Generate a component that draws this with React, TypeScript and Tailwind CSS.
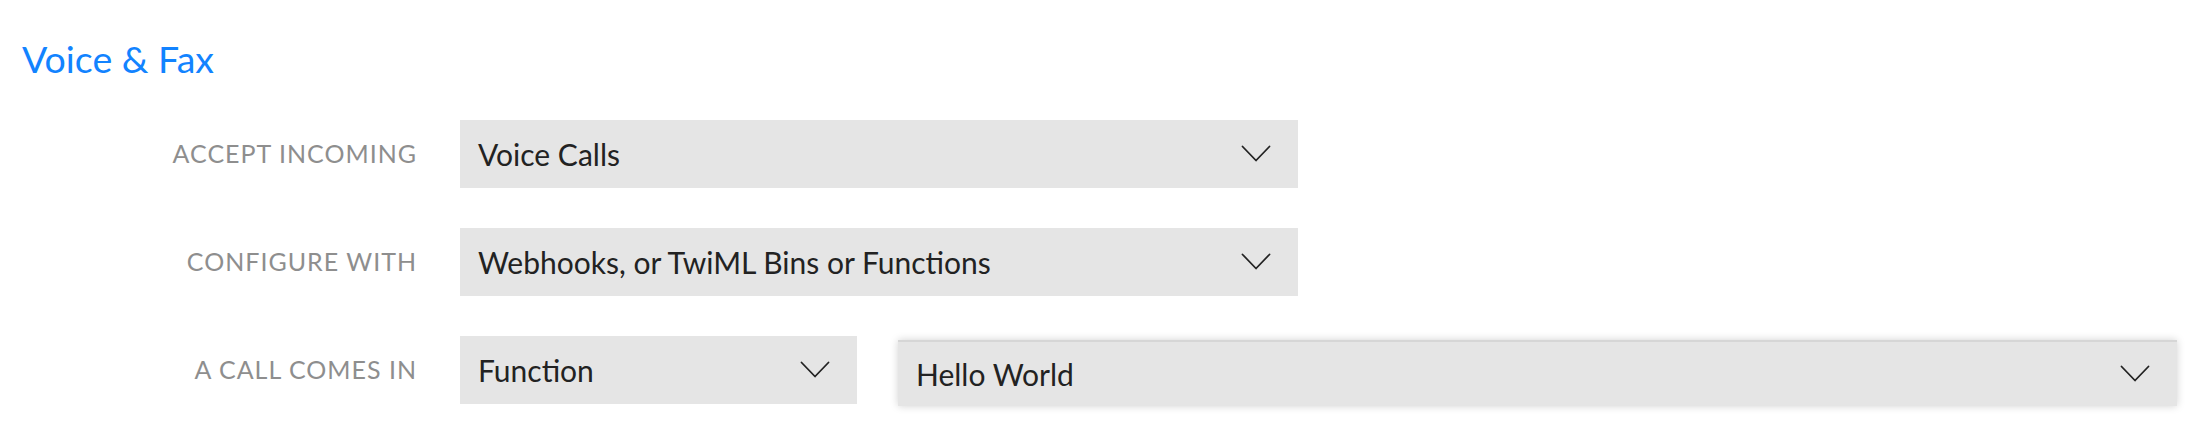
import React from "react";

const Chevron = () => (
  <svg width="30" height="18" viewBox="0 0 30 18" fill="none" className="shrink-0">
    <path d="M1.5 1.5 L15 15.5 L28.5 1.5" stroke="#222" strokeWidth="1.8" strokeLinecap="round" strokeLinejoin="round" />
  </svg>
);

const Select = ({ value, className = "" }: { value: string; className?: string }) => (
  <div className={`flex items-center justify-between bg-[#e5e5e5] pl-[18px] pr-[27px] ${className}`}>
    <span className="text-[30px] text-[#222222]">{value}</span>
    <Chevron />
  </div>
);

const Label = ({ children }: { children: React.ReactNode }) => (
  <div className="flex h-[68px] w-[395px] shrink-0 items-center justify-end text-[25px] tracking-[1px] text-[#8e8e8e]">
    {children}
  </div>
);

export default function App() {
  return (
    <div className="h-[428px] w-[2206px] bg-white pl-[22px] pt-[37px]" style={{ fontFamily: "Lato, 'Open Sans', sans-serif" }}>
      <h2 className="text-[37.5px] leading-[44px] text-[#1283ff]">Voice &amp; Fax</h2>
      <div className="mt-[39px] flex flex-col gap-[40px]">
        <div className="flex items-start gap-[43px]">
          <Label>ACCEPT INCOMING</Label>
          <Select value="Voice Calls" className="h-[68px] w-[838px]" />
        </div>
        <div className="flex items-start gap-[43px]">
          <Label>CONFIGURE WITH</Label>
          <Select value="Webhooks, or TwiML Bins or Functions" className="h-[68px] w-[838px]" />
        </div>
        <div className="flex items-start gap-[43px] pr-[29px]">
          <Label>A CALL COMES IN</Label>
          <Select value="Function" className="h-[68px] w-[397px] shrink-0" />
          <div className="mt-[4px] flex-1">
            <Select
              value="Hello World"
              className="-ml-[2px] h-[66px] border-t-2 border-[#d6d6d6] shadow-[0_0_8px_rgba(0,0,0,0.18)]"
            />
          </div>
        </div>
      </div>
    </div>
  );
}
